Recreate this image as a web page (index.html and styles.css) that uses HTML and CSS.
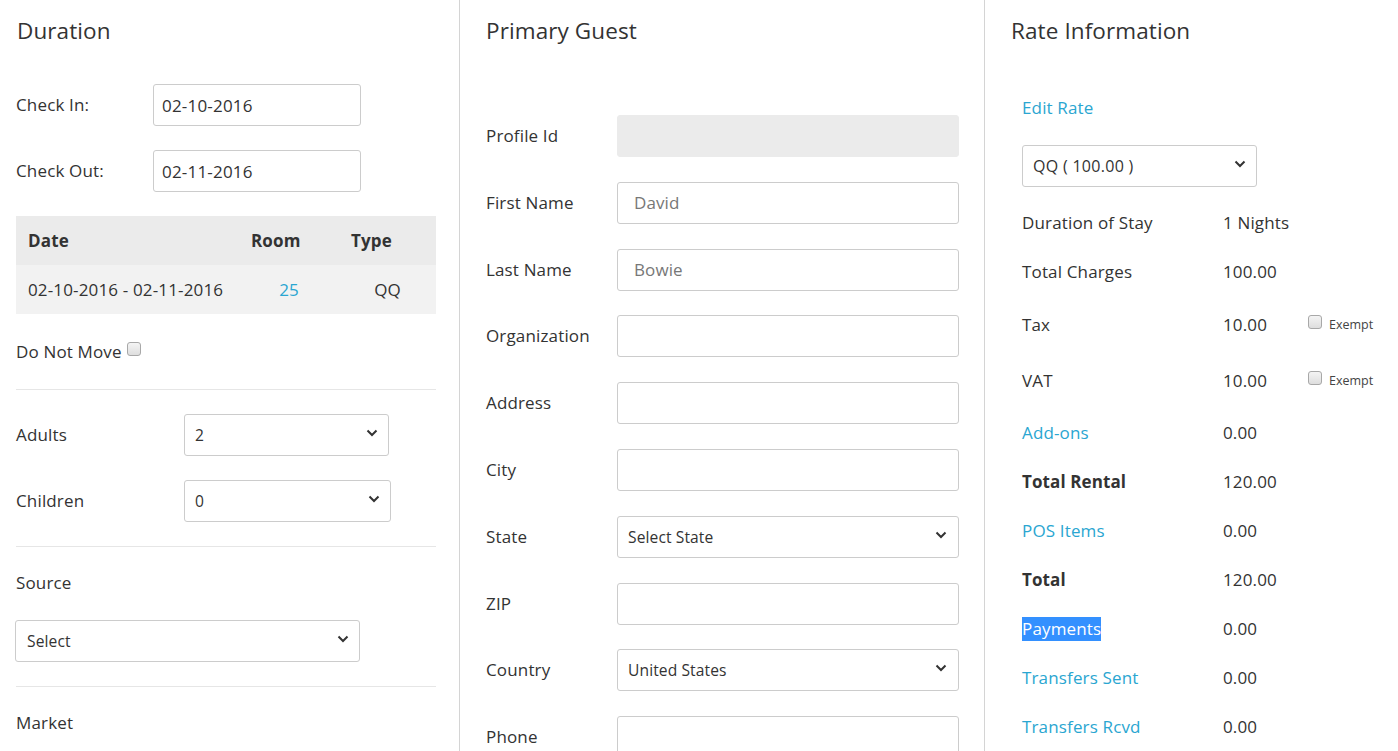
FILE: index.html
```html
<!DOCTYPE html>
<html>
<head>
<meta charset="utf-8">
<link rel="stylesheet" href="styles.css">
</head>
<body>
<div class="page">
  <section class="col col-duration">
    <h2 class="heading">Duration</h2>
    <div class="field-row first">
      <label class="lbl lbl-date">Check In:</label>
      <input class="input date-input" type="text" value="02-10-2016">
    </div>
    <div class="field-row">
      <label class="lbl lbl-date">Check Out:</label>
      <input class="input date-input" type="text" value="02-11-2016">
    </div>
    <table class="room-table">
      <thead>
        <tr><th class="c-date">Date</th><th class="c-room">Room</th><th class="c-type">Type</th></tr>
      </thead>
      <tbody>
        <tr><td class="c-date">02-10-2016 - 02-11-2016</td><td class="c-room link">25</td><td class="c-type">QQ</td></tr>
      </tbody>
    </table>
    <div class="dnm">Do Not Move <span class="checkbox"></span></div>
    <hr class="sep">
    <div class="field-row sel-row">
      <label class="lbl lbl-count">Adults</label>
      <div class="select-wrap w-adults">
        <select class="select"><option>2</option></select>
        <svg class="chev" viewBox="0 0 12 8" width="12" height="8"><path d="M1.5 1.5 L6 6 L10.5 1.5" fill="none" stroke="#333" stroke-width="2"/></svg>
      </div>
    </div>
    <div class="field-row">
      <label class="lbl lbl-count">Children</label>
      <div class="select-wrap w-children">
        <select class="select"><option>0</option></select>
        <svg class="chev" viewBox="0 0 12 8" width="12" height="8"><path d="M1.5 1.5 L6 6 L10.5 1.5" fill="none" stroke="#333" stroke-width="2"/></svg>
      </div>
    </div>
    <hr class="sep tight">
    <div class="plain-label">Source</div>
    <div class="select-wrap w-source">
      <select class="select"><option>Select</option></select>
      <svg class="chev" viewBox="0 0 12 8" width="12" height="8"><path d="M1.5 1.5 L6 6 L10.5 1.5" fill="none" stroke="#333" stroke-width="2"/></svg>
    </div>
    <hr class="sep tight">
    <div class="plain-label">Market</div>
  </section>

  <section class="col col-guest">
    <h2 class="heading">Primary Guest</h2>
    <div class="guest-form">
      <div class="g-row"><label class="lbl g-lbl">Profile Id</label><div class="input g-input disabled"></div></div>
      <div class="g-row"><label class="lbl g-lbl">First Name</label><input class="input g-input muted" type="text" value="David"></div>
      <div class="g-row"><label class="lbl g-lbl">Last Name</label><input class="input g-input muted" type="text" value="Bowie"></div>
      <div class="g-row"><label class="lbl g-lbl">Organization</label><input class="input g-input" type="text"></div>
      <div class="g-row"><label class="lbl g-lbl">Address</label><input class="input g-input" type="text"></div>
      <div class="g-row"><label class="lbl g-lbl">City</label><input class="input g-input" type="text"></div>
      <div class="g-row"><label class="lbl g-lbl">State</label>
        <div class="select-wrap g-input-wrap">
          <select class="select"><option>Select State</option></select>
          <svg class="chev" viewBox="0 0 12 8" width="12" height="8"><path d="M1.5 1.5 L6 6 L10.5 1.5" fill="none" stroke="#333" stroke-width="2"/></svg>
        </div>
      </div>
      <div class="g-row"><label class="lbl g-lbl">ZIP</label><input class="input g-input" type="text"></div>
      <div class="g-row"><label class="lbl g-lbl">Country</label>
        <div class="select-wrap g-input-wrap">
          <select class="select"><option>United States</option></select>
          <svg class="chev" viewBox="0 0 12 8" width="12" height="8"><path d="M1.5 1.5 L6 6 L10.5 1.5" fill="none" stroke="#333" stroke-width="2"/></svg>
        </div>
      </div>
      <div class="g-row"><label class="lbl g-lbl">Phone</label><input class="input g-input" type="text"></div>
    </div>
  </section>

  <section class="col col-rate">
    <h2 class="heading">Rate Information</h2>
    <div class="rate-body">
      <a class="link edit-rate">Edit Rate</a>
      <div class="select-wrap w-rate">
        <select class="select"><option>QQ ( 100.00 )</option></select>
        <svg class="chev" viewBox="0 0 12 8" width="12" height="8"><path d="M1.5 1.5 L6 6 L10.5 1.5" fill="none" stroke="#333" stroke-width="2"/></svg>
      </div>
      <div class="r-row"><span class="r-lbl">Duration of Stay</span><span class="r-val">1 Nights</span></div>
      <div class="r-row"><span class="r-lbl">Total Charges</span><span class="r-val">100.00</span></div>
      <div class="r-row tax"><span class="r-lbl">Tax</span><span class="r-val">10.00</span><span class="exempt"><span class="checkbox"></span><span class="exempt-txt">Exempt</span></span></div>
      <div class="r-row tax"><span class="r-lbl">VAT</span><span class="r-val">10.00</span><span class="exempt"><span class="checkbox"></span><span class="exempt-txt">Exempt</span></span></div>
      <div class="r-row"><span class="r-lbl link">Add-ons</span><span class="r-val">0.00</span></div>
      <div class="r-row"><span class="r-lbl bold">Total Rental</span><span class="r-val">120.00</span></div>
      <div class="r-row"><span class="r-lbl link">POS Items</span><span class="r-val">0.00</span></div>
      <div class="r-row"><span class="r-lbl bold">Total</span><span class="r-val">120.00</span></div>
      <div class="r-row"><span class="r-lbl"><span class="selected">Payments</span></span><span class="r-val">0.00</span></div>
      <div class="r-row"><span class="r-lbl link">Transfers Sent</span><span class="r-val">0.00</span></div>
      <div class="r-row"><span class="r-lbl link">Transfers Rcvd</span><span class="r-val">0.00</span></div>
    </div>
  </section>
</div>
</body>
</html>
```

FILE: styles.css
```css
* { box-sizing: border-box; }
html, body { margin: 0; padding: 0; background: #fff; }
body {
  font-family: "Open Sans", "Liberation Sans", sans-serif;
  font-size: 17px;
  letter-spacing: 0.15px;
  color: #333;
  overflow: hidden;
  height: 751px;
}
.page {
  display: flex;
  height: 751px;
}
.col {
  border-right: 1px solid #d4d4d4;
}
.col-duration { width: 460px; padding: 0 23px 0 16px; }
.col-guest { width: 525px; padding: 0 24px 0 26px; }
.col-rate { flex: 1; padding: 0 0 0 26px; border-right: none; }

.heading {
  font-size: 22.5px;
  font-weight: 400;
  letter-spacing: 0.1px;
  line-height: 30px;
  margin: 16px 0 0;
  color: #333;
}
.col-duration .heading { padding-left: 1px; }

.lbl { font-size: 17px; line-height: 24px; }
.link { color: #2aa6d1; text-decoration: none; }
.bold { font-weight: 700; letter-spacing: 0.1px; }

.input {
  height: 42px;
  border: 1px solid #ccc;
  border-radius: 3px;
  font-family: inherit;
  font-size: 17px;
  letter-spacing: 0.2px;
  color: #333;
  background: #fff;
  padding: 0 8px;
  outline: none;
}

.field-row { display: flex; align-items: center; margin-top: 24px; }
.field-row.first { margin-top: 38px; }
.lbl-date { width: 137px; }
.date-input { width: 208px; }
.lbl-count { width: 168px; }

.room-table {
  width: 420px;
  margin-top: 24px;
  border-collapse: collapse;
}
.room-table th, .room-table td { height: 49px; padding: 0 12px; }
.room-table th { background: #ebebeb; text-align: left; font-weight: 700; }
.room-table td { background: #f2f2f2; }
.room-table .c-date { width: 223px; }
.room-table .c-room { width: 100px; }
.room-table td.c-room, .room-table td.c-type { text-align: center; }

.dnm { margin-top: 26px; line-height: 24px; display: flex; align-items: center; }
.checkbox {
  display: inline-block;
  width: 14px;
  height: 14px;
  border: 1px solid #a8a8a8;
  border-radius: 3px;
  background: linear-gradient(#f4f4f4, #dedede);
}
.dnm .checkbox { margin-left: 5px; position: relative; top: -3px; }

.sep { border: 0; border-top: 1px solid #e6e6e6; margin: 25px 0 0; height: 0; }
.sep.tight { margin-top: 24px; }
.sel-row { margin-top: 24px; }

.select-wrap { position: relative; height: 42px; }
.select {
  appearance: none;
  -webkit-appearance: none;
  width: 100%;
  height: 42px;
  border: 1px solid #ccc;
  border-radius: 3px;
  background: #fff;
  font-family: inherit;
  font-size: 15.6px;
  letter-spacing: 0.1px;
  color: #333;
  padding: 0 10px;
  outline: none;
}
.chev { position: absolute; right: 11px; top: 15px; pointer-events: none; }
.w-adults { width: 205px; }
.w-children { width: 207px; }
.w-source { width: 345px; margin: 25px 0 0 -1px; }
.w-source .select { padding-left: 11px; }
.w-rate { width: 235px; margin-top: 25px; }
.w-rate .select { font-size: 16px; letter-spacing: 0.3px; }

.plain-label { margin-top: 24px; line-height: 24px; }

.guest-form { margin-top: 69px; display: flex; flex-direction: column; gap: 24.8px; }
.g-row { display: flex; align-items: center; }
.g-lbl { width: 131px; }
.g-input { width: 342px; }
.g-input-wrap { width: 342px; }
.g-input.muted { color: #777; padding-left: 16px; letter-spacing: 0.1px; }
.g-input.disabled { background: #ebebeb; border-color: #ebebeb; }
.g-input-wrap .chev { right: 12px; }

.rate-body { padding-left: 11px; margin-top: 50px; }
.edit-rate { display: block; line-height: 24px; }
.r-row { display: flex; align-items: center; height: 24px; margin-top: 24px; line-height: 24px; }
.r-row + .r-row { margin-top: 25px; }
.r-row.tax { height: 31px; }
.r-lbl { width: 201px; }
.r-val { width: 85px; }
.exempt { display: flex; align-items: center; }
.exempt .checkbox { position: relative; top: -3px; }
.exempt-txt { font-size: 12.5px; margin-left: 7px; color: #444; letter-spacing: 0; }
.selected {
  display: inline-block;
  background: #3390ff;
  color: #fff;
  line-height: 24px;
}
```
